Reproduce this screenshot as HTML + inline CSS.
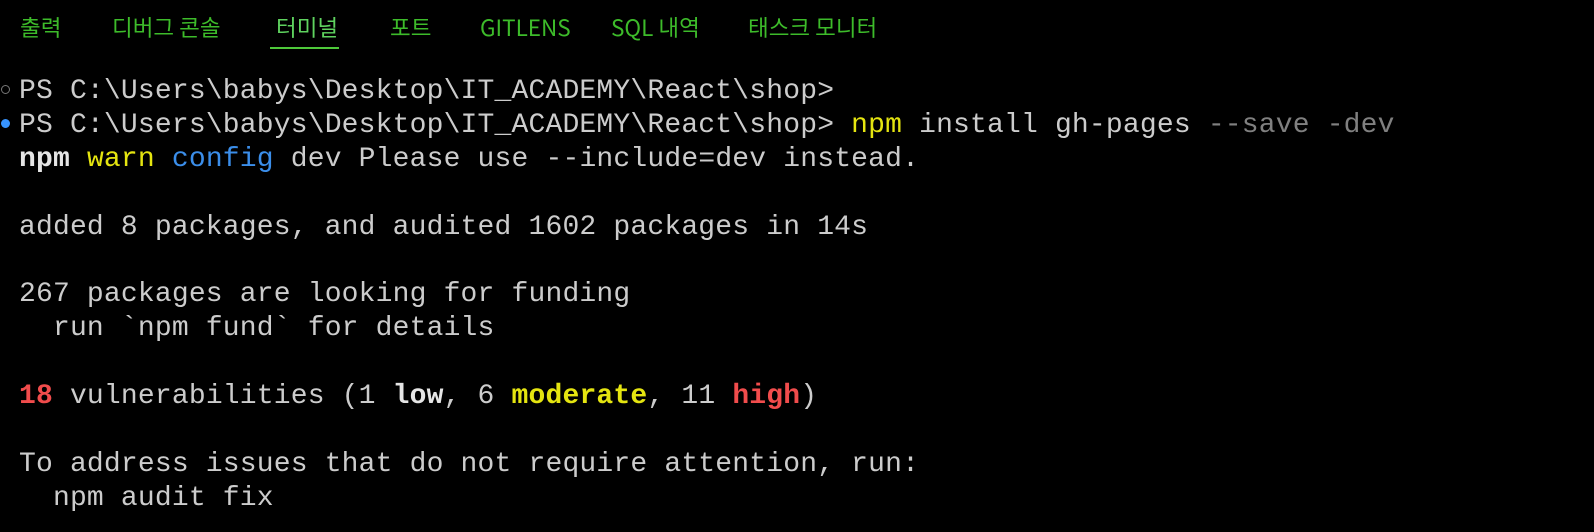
<!DOCTYPE html>
<html><head><meta charset="utf-8"><style>
html,body{margin:0;padding:0;background:#000;width:1594px;height:532px;overflow:hidden}
.tabs{position:absolute;top:12px;left:0;font-family:"Noto Sans CJK KR","Liberation Sans",sans-serif;font-size:22.5px;line-height:30px;color:#3dbb2a}
.tab{position:absolute;white-space:nowrap;top:0}
.act{color:#5fd35f}
.ul{position:absolute;left:270px;top:47px;width:69px;height:2px;background:#4ec93a}
.term{position:absolute;left:19px;top:75px;font-family:"Liberation Mono",monospace;font-size:28px;letter-spacing:0.18px;line-height:33.9px;color:#cccccc;white-space:pre}
.y{color:#e5e510}.b{color:#3b8eea}.r{color:#f14c4c}.g{color:#808080}.w{color:#e5e5e5}
b{font-weight:bold}
.dot1{position:absolute;left:1px;top:85px;width:9px;height:9px;border:1.5px solid #777;border-radius:50%;box-sizing:border-box}
.dot2{position:absolute;left:1px;top:119px;width:9px;height:9px;background:#3794ff;border-radius:50%}
</style></head><body>
<div class="tabs">
<span class="tab" style="left:20px">출력</span>
<span class="tab" style="left:112px">디버그 콘솔</span>
<span class="tab act" style="left:276px">터미널</span>
<span class="tab" style="left:390px">포트</span>
<span class="tab" style="left:480px">GITLENS</span>
<span class="tab" style="left:611px">SQL 내역</span>
<span class="tab" style="left:748px">태스크 모니터</span>
</div>
<div class="ul"></div>
<div class="dot1"></div><div class="dot2"></div>
<div class="term">PS C:\Users\babys\Desktop\IT_ACADEMY\React\shop>
PS C:\Users\babys\Desktop\IT_ACADEMY\React\shop> <span class="y">npm</span> install gh-pages <span class="g">--save -dev</span>
<b class="w">npm</b> <span class="y">warn</span> <span class="b">config</span> dev Please use --include=dev instead.

added 8 packages, and audited 1602 packages in 14s

267 packages are looking for funding
  run `npm fund` for details

<b class="r">18</b> vulnerabilities (1 <b class="w">low</b>, 6 <b class="y">moderate</b>, 11 <b class="r">high</b>)

To address issues that do not require attention, run:
  npm audit fix</div>
</body></html>
